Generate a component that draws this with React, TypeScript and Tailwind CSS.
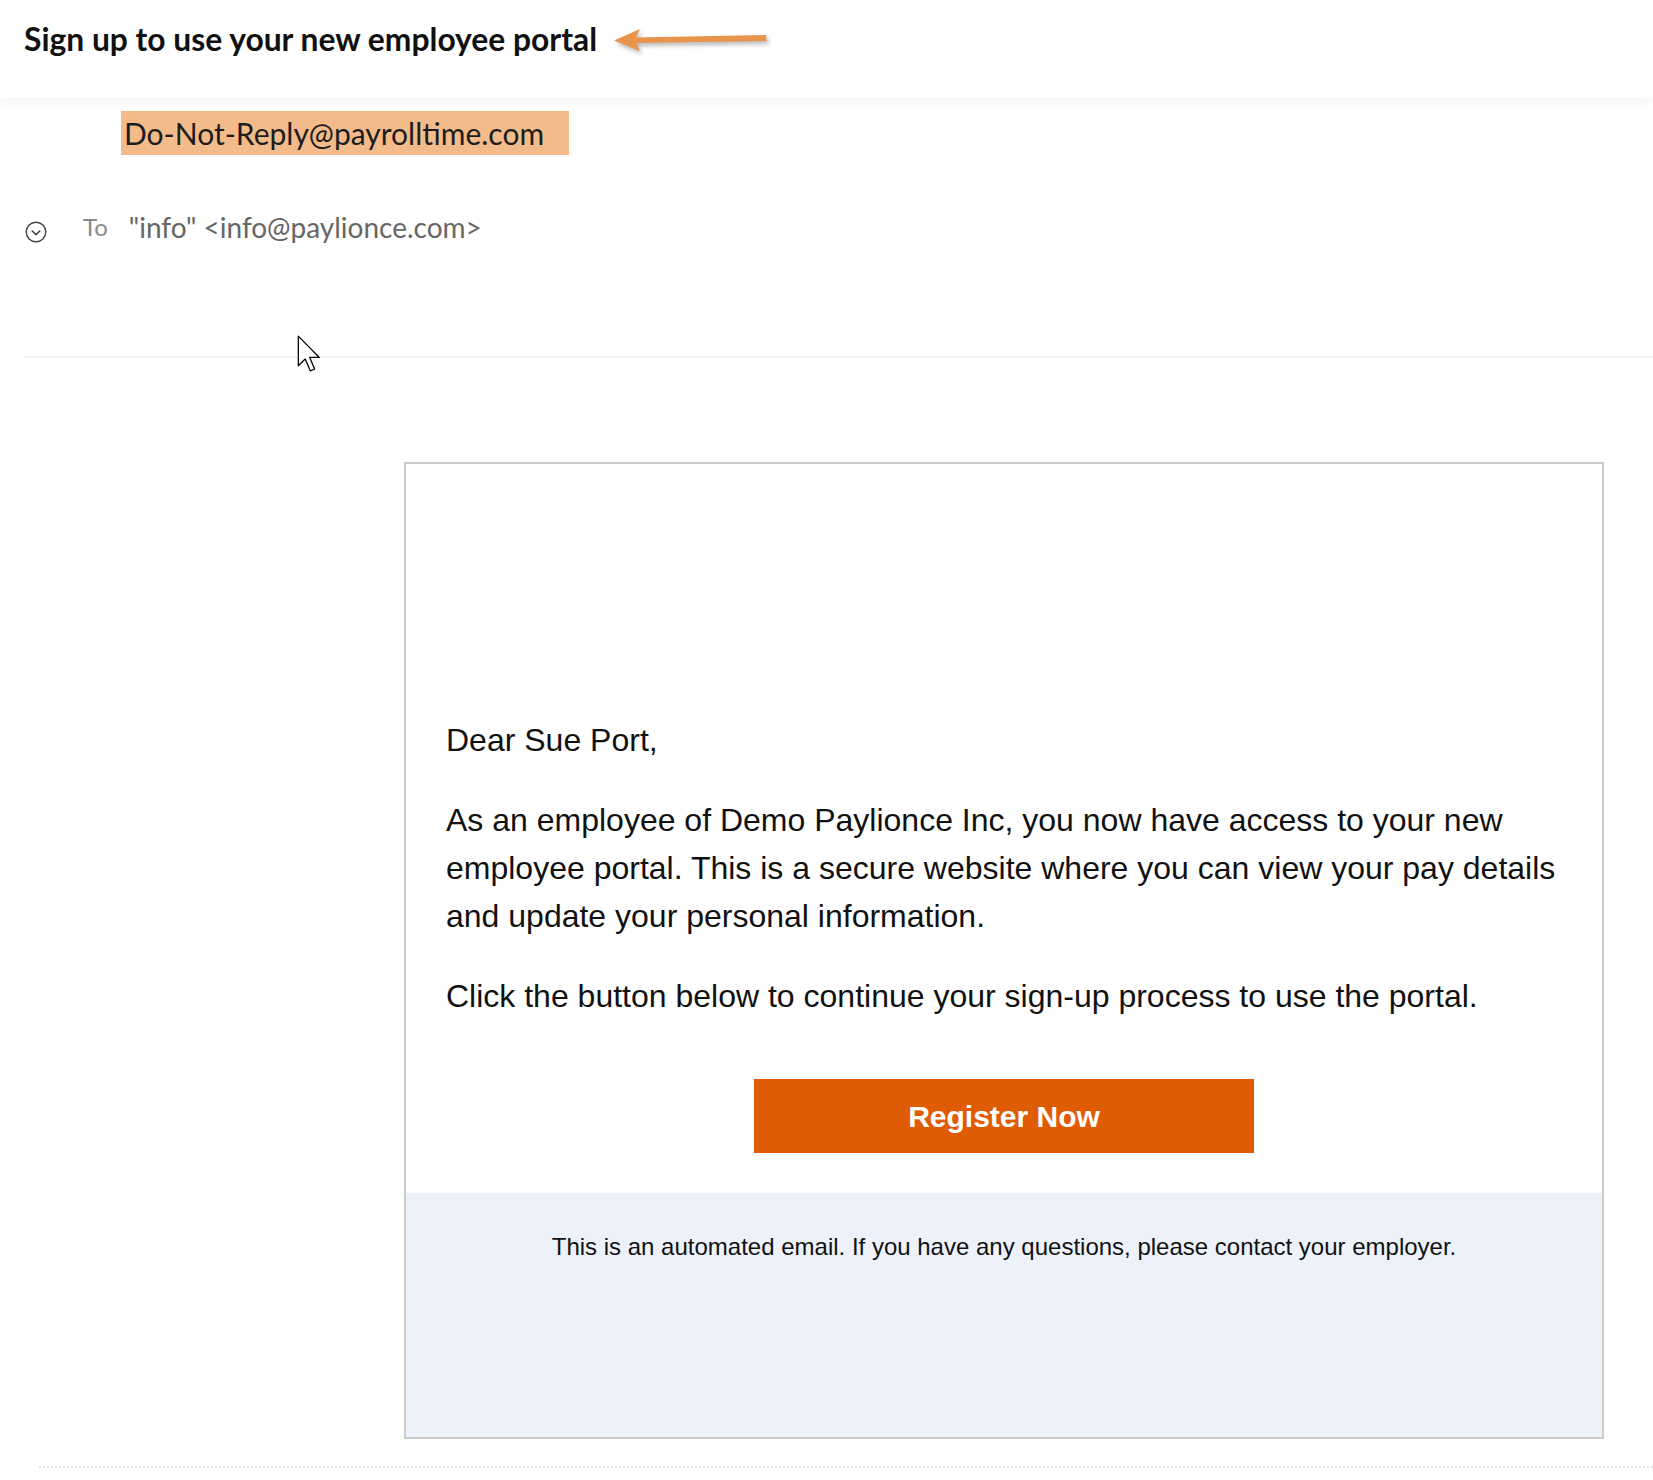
import React from "react";

function PointerArrow() {
  return (
    <svg
      width="160"
      height="28"
      viewBox="0 0 160 28"
      className="drop-shadow-[2px_3px_2px_rgba(0,0,0,0.28)]"
      aria-hidden="true"
    >
      <path d="M22 11.5 L153 9 L153.5 15 L22 17 Z" fill="#e8944c" />
      <path d="M1 14.5 L27 3 L22 14 L27 25 Z" fill="#e8944c" />
    </svg>
  );
}

function CircleChevron() {
  return (
    <svg width="22" height="22" viewBox="0 0 22 22" aria-hidden="true">
      <circle cx="11" cy="11" r="9.8" fill="none" stroke="#444" strokeWidth="1.4" />
      <path d="M7.2 10 L11 13.6 L14.8 10" fill="none" stroke="#444" strokeWidth="1.6" strokeLinecap="round" strokeLinejoin="round" />
    </svg>
  );
}

function MouseCursor() {
  return (
    <svg width="24" height="38" viewBox="0 0 13 21" aria-hidden="true">
      <path
        d="M0.6 0.6 L0.6 17 L4.4 13.3 L7.2 19.8 L9.6 18.8 L6.9 12.4 L12.2 12.4 Z"
        fill="#fff"
        stroke="#000"
        strokeWidth="0.7"
        strokeLinejoin="round"
      />
    </svg>
  );
}

export default function App() {
  return (
    <div className="relative h-[1480px] w-[1653px] overflow-hidden bg-white font-[Lato,sans-serif]">
      <header className="relative z-10 flex h-[98px] items-center pb-[20px] pl-[24px] shadow-[0_5px_8px_rgba(0,0,0,0.035)]">
        <h1 className="text-[31.8px] font-bold leading-[38px] text-[#111]">Sign up to use your new employee portal</h1>
        <div className="ml-[16px] mt-[2px]">
          <PointerArrow />
        </div>
      </header>

      <div className="pl-[121px] pt-[13px]">
        <span className="inline-block h-[44px] bg-[#f3bb8a] pl-[3px] pr-[25px] text-[30px] leading-[44px] text-[#1d1d1d]">
          Do-Not-Reply@payrolltime.com
        </span>
      </div>

      <div className="mt-[52px] flex h-[40px] items-center pl-[25px]">
        <div className="mt-[10px]">
          <CircleChevron />
        </div>
        <span className="ml-[36px] text-[24px] text-[#8a8a8a]">To</span>
        <span className="ml-[21px] text-[28px] text-[#666]">"info" &lt;info@paylionce.com&gt;</span>
      </div>

      <div className="ml-[23px] mt-[109px] h-[2px] bg-[#f2f2f2]" />

      <div className="ml-[404px] mt-[104px] w-[1200px] border-2 border-[#cbcbcb] font-['Liberation_Sans',Arial,sans-serif] text-[#111]">
        <div className="h-[252px]" />
        <div className="px-[40px] text-[32px] leading-[48px]">
          <p>Dear Sue Port,</p>
          <p className="mt-[32px]">
            As an employee of Demo Paylionce Inc, you now have access to your new employee portal. This is a secure
            website where you can view your pay details and update your personal information.
          </p>
          <p className="mt-[32px]">Click the button below to continue your sign-up process to use the portal.</p>
        </div>
        <div className="flex justify-center pb-[40px] pt-[59px]">
          <button
            type="button"
            className="h-[74px] w-[500px] bg-[#df5c05] text-[30px] font-bold text-white"
          >
            Register Now
          </button>
        </div>
        <div className="h-[244px] bg-[#edf1f9] pt-[36px] text-center text-[24px] leading-[36px] text-[#111]">
          This is an automated email. If you have any questions, please contact your employer.
        </div>
      </div>

      <div className="ml-[39px] mt-[27px] border-t-2 border-dotted border-[#e3e3e3]" />

      <div className="absolute left-[297px] top-[335px]">
        <MouseCursor />
      </div>
    </div>
  );
}
